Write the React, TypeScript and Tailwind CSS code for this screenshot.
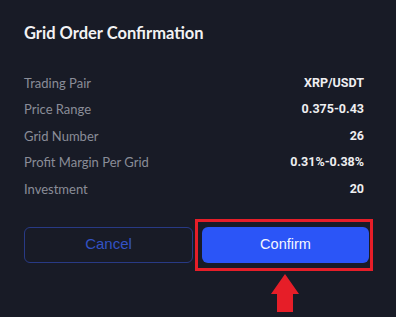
import React from 'react';

const rows: [string, string][] = [
  ['Trading Pair', 'XRP/USDT'],
  ['Price Range', '0.375-0.43'],
  ['Grid Number', '26'],
  ['Profit Margin Per Grid', '0.31%-0.38%'],
  ['Investment', '20'],
];

export default function App() {
  return (
    <div className="relative w-[396px] h-[317px] overflow-hidden bg-[#181b26] px-6 pt-[21px]">
      <h2 className="text-[16.5px] font-bold text-[#f2f2f4] leading-[24px] [font-family:Lato,'Noto_Sans',sans-serif]">
        Grid Order Confirmation
      </h2>

      <div className="mt-[25px] flex flex-col pr-[8px]">
        {rows.map(([label, value]) => (
          <div key={label} className="flex h-[26.5px] items-center justify-between">
            <span className="text-[13px] text-[#8a8d98] [font-family:Lato,sans-serif]">{label}</span>
            <span className="text-[12.5px] font-bold text-[#eeeef0] [font-family:Roboto,sans-serif]">{value}</span>
          </div>
        ))}
      </div>

      <div className="mt-[24px] flex gap-[9px] pr-[3px]">
        <button className="h-[36px] w-[169px] rounded-[6px] border border-[#283a85] text-[15px] text-[#3352c4] [font-family:'Liberation_Sans',Arial,sans-serif]">
          Cancel
        </button>
        <button className="h-[36px] w-[167px] rounded-[6px] bg-[#2b55f7] text-[14.5px] text-[#f4f6ff] [font-family:'Liberation_Sans',Arial,sans-serif]">
          Confirm
        </button>
      </div>

      {/* annotation highlight */}
      <div className="absolute left-[195px] top-[219px] h-[52px] w-[178px] border-[3px] border-[#e61e28]" />
      <svg className="absolute left-[270px] top-[273px]" width="30" height="40" viewBox="0 0 30 40">
        <path d="M15 1 L29 21 L23 21 L23 39 L7 39 L7 21 L1 21 Z" fill="#e61e28" />
      </svg>
    </div>
  );
}
